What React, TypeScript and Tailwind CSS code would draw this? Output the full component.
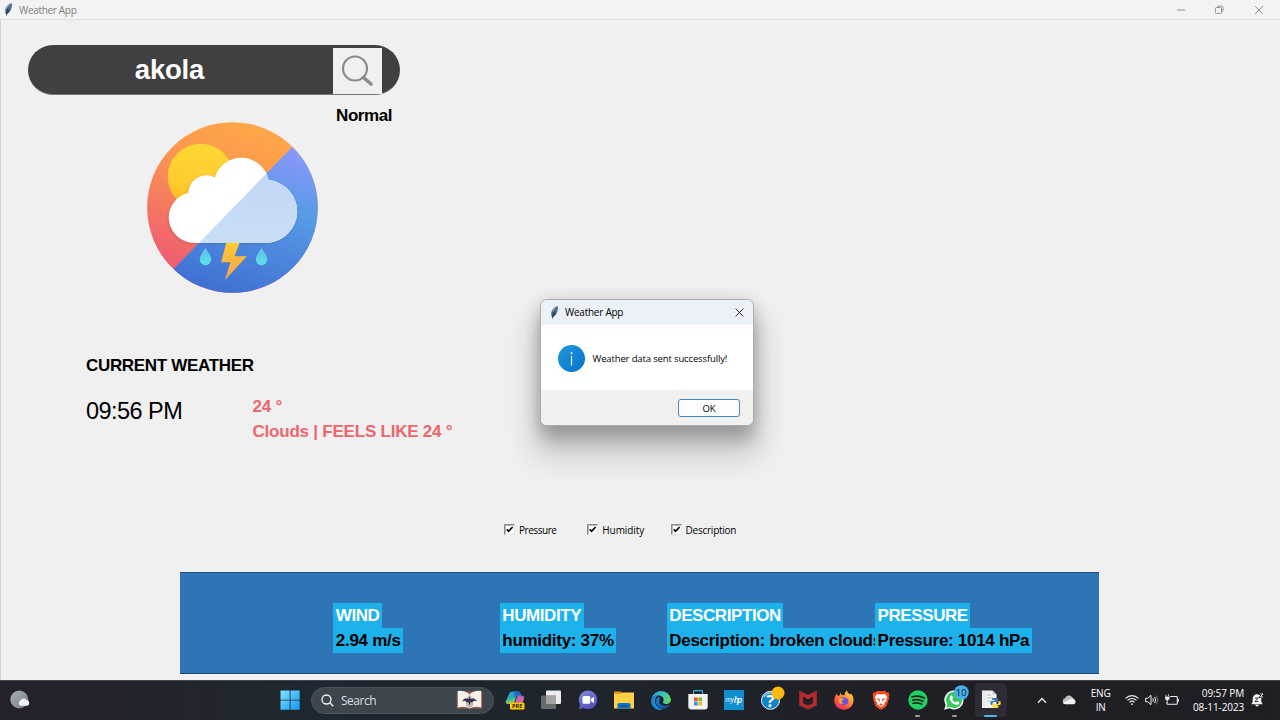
import type { ReactNode } from "react";

const arial = "font-['Liberation_Sans',Arial,sans-serif]";
const segoe = "font-['Open_Sans','Noto_Sans',sans-serif]";

function Feather({ className }: { className: string }) {
  return (
    <svg className={className} viewBox="0 0 24 38" fill="none">
      <path d="M22 1C13 1 5 10 3 19c-1 5-1 10 2 14 5-2 10-6 13-12 3-6 5-13 4-20z" fill="#456a94" />
      <path d="M21 1C14 2 8 9 5 18l6-4 1 4c4-5 7-10 9-16z" fill="#8aa8c6" />
      <path d="M5 33c3-2 8-6 12-12l-4 1 5-5" fill="#1b2c44" />
      <path d="M19 4C12 12 7 22 6 37" stroke="#111a28" strokeWidth="2" />
    </svg>
  );
}

function WeatherLogo() {
  return (
    <svg className="mt-[27px] ml-[146px] h-[171px] w-[171px] shrink-0" viewBox="52 36 512 512">
      <defs>
        <linearGradient id="warm" x1="0.6" y1="0" x2="0.2" y2="1">
          <stop offset="0" stopColor="#ffa748" />
          <stop offset="0.3" stopColor="#fb974f" />
          <stop offset="0.85" stopColor="#ef5f70" />
          <stop offset="1" stopColor="#ee5b72" />
        </linearGradient>
        <linearGradient id="cool" x1="0.85" y1="0.15" x2="0.55" y2="1">
          <stop offset="0" stopColor="#9298fb" />
          <stop offset="0.15" stopColor="#8697f8" />
          <stop offset="0.45" stopColor="#569be6" />
          <stop offset="1" stopColor="#3f6fd2" />
        </linearGradient>
        <linearGradient id="sun" x1="0.5" y1="0" x2="0.4" y2="1">
          <stop offset="0" stopColor="#fcd835" />
          <stop offset="0.6" stopColor="#ffcc2d" />
          <stop offset="1" stopColor="#ffb526" />
        </linearGradient>
        <linearGradient id="bolt" x1="0" y1="0" x2="0" y2="1">
          <stop offset="0" stopColor="#fbcd2f" />
          <stop offset="1" stopColor="#fba052" />
        </linearGradient>
        <linearGradient id="drop" x1="0" y1="0" x2="0" y2="1">
          <stop offset="0" stopColor="#62b9ee" />
          <stop offset="1" stopColor="#58e5ea" />
        </linearGradient>
        <linearGradient id="shade" x1="0" y1="0" x2="0" y2="1">
          <stop offset="0" stopColor="#c2d5f8" />
          <stop offset="1" stopColor="#c9def5" />
        </linearGradient>
        <clipPath id="disc">
          <circle cx="308" cy="292" r="255.5" />
        </clipPath>
        <clipPath id="lower">
          <path d="M600-6 L20 591 H700 V-6 Z" />
        </clipPath>
        <filter id="soft" x="-20%" y="-20%" width="140%" height="140%">
          <feDropShadow dx="-2" dy="3" stdDeviation="5" floodColor="#603050" floodOpacity="0.22" />
        </filter>
        <path
          id="cloud"
          d="M194 398a76 76 0 0 1-18-150A53.500 53.500 0 0 1 255 202A83 83 0 0 1 416 210A94.200 94.200 0 0 1 408 398Z"
        />
      </defs>
      <g clipPath="url(#disc)">
        <rect x="52" y="36" width="512" height="512" fill="url(#warm)" />
        <circle cx="213" cy="200" r="99" fill="url(#sun)" />
        <path d="M600-6 L20 591 H700 V-6 Z" fill="url(#cool)" />
        <use href="#cloud" fill="#fff" filter="url(#soft)" />
        <use href="#cloud" fill="url(#shade)" clipPath="url(#lower)" />
        <path d="M289 398h40l-15 40h37l-66 72 17-54h-28z" fill="url(#bolt)" />
        <path d="M227 412c6 13 17 23 17 36a17 17 0 0 1-34 0c0-13 11-23 17-36z" fill="url(#drop)" />
        <path d="M395 412c6 13 17 23 17 36a17 17 0 0 1-34 0c0-13 11-23 17-36z" fill="url(#drop)" />
      </g>
    </svg>
  );
}

function Check({ label, tracking }: { label: string; tracking: string }) {
  return (
    <label className="flex w-[83.300px] items-center">
      <svg className="h-[11px] w-[11px] shrink-0" viewBox="0 0 11 11">
        <rect x="0" y="0" width="11" height="11" fill="#e6e6e6" />
        <rect x="1" y="1" width="9" height="9" fill="#fff" />
        <path d="M0.500 10.500V0.500H10.500" fill="none" stroke="#8d8d8d" />
        <path d="M1.300 10V1.300H10" fill="none" stroke="#6f6f6f" strokeWidth="0.6" />
        <path d="M2.800 5.200L4.600 7.300L8.600 3" fill="none" stroke="#000" strokeWidth="1.700" />
      </svg>
      <span className={`ml-[4px] text-[10px] leading-[14px] ${tracking}`}>{label}</span>
    </label>
  );
}

function Stat({ title, value }: { title: string; value: string }) {
  return (
    <div className="relative flex min-w-0 flex-col items-start text-[17px] leading-[25px] font-bold whitespace-nowrap">
      <span className="bg-[#1eb2ed] pr-[2.500px] pl-[2.500px] tracking-[-0.420px] text-white">{title}</span>
      <span className="bg-[#1eb2ed] pr-[2.500px] pl-[2.500px] tracking-[-0.290px] text-black">{value}</span>
    </div>
  );
}

function Slot({ children, dot, active }: { children: ReactNode; dot?: boolean; active?: boolean }) {
  return (
    <div className="flex h-10 w-[36.650px] shrink-0 items-center justify-center">
      <div className={`relative flex h-[34px] w-[32px] items-center justify-center rounded-[4px] ${active ? "bg-[#2d2c34]" : ""}`}>
        {children}
        {dot && <span className="absolute bottom-0 h-[2px] w-[5px] rounded-full bg-[#9b9b9f]" />}
        {active && <span className="absolute bottom-0 h-[2px] w-[13px] rounded-full bg-[#58b4ee]" />}
      </div>
    </div>
  );
}

const ic = "h-[20px] w-[20px] overflow-visible";

function Taskbar() {
  return (
    <footer className={`flex h-10 shrink-0 items-center border-t border-[#45434a] bg-linear-to-r from-[#25212a] via-[#1e2830] via-25% to-[#201e25] to-75% pb-px ${segoe}`}>
      <div className="flex w-[279.500px] shrink-0 items-center pl-[9.500px]">
        <svg className={ic} viewBox="0 0 20 20">
          <defs>
            <linearGradient id="moon" x1="0" y1="0" x2="1" y2="1">
              <stop offset="0" stopColor="#aab2ba" />
              <stop offset="1" stopColor="#747c85" />
            </linearGradient>
          </defs>
          <circle cx="9.300" cy="9.500" r="9" fill="url(#moon)" />
          <path d="M10.500 15.800a2.800 2.800 0 0 1 0-5.200 3.600 3.600 0 0 1 6.200-.6 3 3 0 0 1 .6 5.800z" fill="#eef1f4" />
        </svg>
      </div>
      <svg className={ic} viewBox="0 0 20 20">
        <defs>
          <linearGradient id="win" gradientUnits="userSpaceOnUse" x1="0" y1="0" x2="20" y2="20">
            <stop offset="0" stopColor="#80e6ff" />
            <stop offset="1" stopColor="#1096f5" />
          </linearGradient>
        </defs>
        <path d="M.500.500h9.200v9.200H.500zM10.500.500h9.200v9.200h-9.200zM.500 10.500h9.200v9.200H.500zM10.500 10.500h9.200v9.200h-9.200z" fill="url(#win)" />
      </svg>
      <div className="ml-[11.500px] flex h-[27px] w-[183px] shrink-0 items-center rounded-full border border-[#4b535b] bg-[#3d454d] pl-[9px]">
        <svg className="h-[13px] w-[13px] shrink-0" viewBox="0 0 13 13" fill="none" stroke="#f3f3f3" strokeWidth="1.300">
          <circle cx="5.500" cy="5.500" r="4.500" />
          <path d="M8.800 8.800l3.500 3.500" />
        </svg>
        <span className="mt-[2px] ml-[7px] w-[115px] text-[12px] leading-4 tracking-[-0.500px] text-[#dcdfe2]">Search</span>
        <svg className="h-[20px] w-[27px] shrink-0" viewBox="0 0 27 20">
          <path d="M.800 1.500h25.400v17H.800z" fill="#9c5a4c" />
          <path d="M1.800 1Q9 0 13.500 4.500Q18 0 25.200 1V17.500Q18 15.500 13.500 18.500Q9 15.500 1.800 17.500z" fill="#f5f1ea" />
          <path d="M13.500 4.500Q10 8 10 15.500L13.500 18.500L17 15.500Q17 8 13.500 4.500z" fill="#bcb8b4" />
          <path d="M13.500 6l.8 3 3.500-.8 3.500 3-3.500-.4-1.500 1.700-1.700-.6-1.100 3.500-1.100-3.500-1.700.6-1.500-1.700-3.500.4 3.500-3 3.500.8z" fill="#35304f" />
        </svg>
      </div>
      <div className="ml-[2.200px] flex">
        <Slot>
          <svg className={ic} viewBox="0 0 20 20">
            <defs>
              <linearGradient id="copA" x1="0" y1="0" x2="0.3" y2="1">
                <stop offset="0" stopColor="#2294ec" />
                <stop offset="0.6" stopColor="#2fb0a8" />
                <stop offset="1" stopColor="#b7d334" />
              </linearGradient>
              <linearGradient id="copB" x1="0" y1="0" x2="0.2" y2="1">
                <stop offset="0" stopColor="#a55be8" />
                <stop offset="1" stopColor="#f36c7c" />
              </linearGradient>
            </defs>
            <path d="M7.500 1.500h5.500c1.300 0 2 .8 2.500 2l.6 2h-4.300L8.800 14H3C.800 14 .300 12.500 1 10.500L4 4c.7-1.700 2-2.500 3.500-2.500z" fill="url(#copA)" />
            <path d="M9 1.500h4c1.300 0 2 .8 2.500 2l.6 2h-4.300L10 8z" fill="#2369c9" />
            <path d="M12.500 5.500h4c2.200 0 3 1.500 2.400 3.500L17 15H9.500z" fill="url(#copB)" />
            <rect x="5" y="12.800" width="14.500" height="6.700" rx="1" fill="#fccb09" />
            <text x="12.250" y="18.200" textAnchor="middle" fontSize="5.600" fontWeight="700" fontFamily="Open Sans, sans-serif" fill="#2b2200">PRE</text>
          </svg>
        </Slot>
        <Slot>
          <svg className={ic} viewBox="0 0 20 20">
            <rect x="5" y="0.500" width="15" height="13.500" rx="1" fill="#ececec" />
            <rect x="0" y="5.500" width="15" height="13.500" rx="1" fill="#777" fillOpacity="0.85" />
            <rect x="5" y="5.500" width="10" height="8.500" fill="#a3a3a3" />
          </svg>
        </Slot>
        <Slot>
          <svg className={ic} viewBox="0 0 20 20">
            <defs>
              <linearGradient id="chat" x1="0" y1="0" x2="0.5" y2="1">
                <stop offset="0" stopColor="#8388d8" />
                <stop offset="1" stopColor="#5553c0" />
              </linearGradient>
            </defs>
            <path d="M10 .500a9.300 9.300 0 1 1-4.300 17.600L1 19.200l1-4.800A9.300 9.300 0 0 1 10 .500z" fill="url(#chat)" />
            <rect x="4.500" y="6" width="7.800" height="7.800" rx="1.500" fill="#fff" />
            <path d="M13 9l3-2.300v6.500L13 11z" fill="#fff" />
          </svg>
        </Slot>
        <Slot>
          <svg className={ic} viewBox="0 0 20 20">
            <path d="M0 1.500h7l2 2.500H0z" fill="#dd9a12" />
            <path d="M0 4h7l1.500-1.500H19.500q.5 0 .5.500v15.500H0z" fill="#ffcf48" />
            <path d="M3.500 18.500v-4q0-1.500 1.500-1.500h10q1.500 0 1.500 1.500v4z" fill="#1173c2" />
            <path d="M6.500 15.500h7v1h-7z" fill="#0b4a86" />
          </svg>
        </Slot>
        <Slot>
          <svg className={ic} viewBox="0 0 20 20">
            <defs>
              <linearGradient id="edgeA" x1="0" y1="0.3" x2="1" y2="0.4">
                <stop offset="0" stopColor="#279fdf" />
                <stop offset="0.6" stopColor="#38c6bd" />
                <stop offset="1" stopColor="#6bd94f" />
              </linearGradient>
              <linearGradient id="edgeB" x1="0" y1="0" x2="0.6" y2="1">
                <stop offset="0" stopColor="#1b8ddb" />
                <stop offset="1" stopColor="#0f539f" />
              </linearGradient>
            </defs>
            <path d="M.300 9A10 10 0 0 1 20 9.500c0 2.800-2.200 4.500-4.700 4.500-2.200 0-3.500-.8-3.500-1.700 0-.7.900-1 .9-2.600C12.700 7.500 10.500 5.500 7 5.500 3.500 5.500 1.300 7 .300 9z" fill="url(#edgeA)" />
            <path d="M.100 10.500C.300 7.500 3.500 5.300 7 5.500c-2 1-3 3-3 5.300 0 4 3.300 8.200 8.500 8.700C6 21.500 0 17 .100 10.500z" fill="#1b8ade" />
            <path d="M8.500 6.500c-2.300 1-3.500 3-3.500 5 0 4.500 4 7.700 8.500 7.300 2-.6 4-2 5.200-4-1.500.8-3 1.200-4.700 1-4-.2-6.500-3-5.500-5.300z" fill="url(#edgeB)" />
          </svg>
        </Slot>
        <Slot>
          <svg className={ic} viewBox="0 0 20 20">
            <path d="M5.500 4V1.500q0-.8.8-.8h7.400q.8 0 .8.800V4" fill="none" stroke="#3fb2e9" strokeWidth="1.200" />
            <path d="M.300 4h19.400v12.500q0 3-3 3H3.300q-3 0-3-3z" fill="#f2f2f2" />
            <path d="M6 7.500h3.700v3.700H6z" fill="#e8502f" />
            <path d="M10.300 7.500H14v3.700h-3.700z" fill="#7dba31" />
            <path d="M6 11.800h3.700v3.700H6z" fill="#2e9ce2" />
            <path d="M10.300 11.800H14v3.700h-3.700z" fill="#f5b824" />
          </svg>
        </Slot>
        <Slot>
          <svg className={ic} viewBox="0 0 20 20">
            <rect width="20" height="20" rx="0.600" fill="#0f8fd0" />
            <text x="1.300" y="12" fontSize="6.500" fontStyle="italic" textLength="8.500" fontFamily="Open Sans, sans-serif" fill="#fff">my</text>
            <text x="9.700" y="12.600" fontSize="9" fontWeight="600" fontStyle="italic" textLength="8.500" fontFamily="Open Sans, sans-serif" fill="#fff">hp</text>
          </svg>
        </Slot>
        <Slot>
          <svg className={ic} viewBox="0 0 20 20">
            <circle cx="9.500" cy="10.300" r="9" fill="#0d86c6" stroke="#e6f4fb" strokeWidth="1" />
            <path d="M3 7a8 8 0 0 1 8-4" stroke="#fff" strokeWidth="0.900" fill="none" />
            <text x="9.500" y="16.500" textAnchor="middle" fontSize="16.500" fontWeight="700" fontFamily="Open Sans, sans-serif" fill="#fff">?</text>
            <circle cx="17" cy="3" r="6.500" fill="#fdb90b" />
          </svg>
        </Slot>
        <Slot>
          <svg className={ic} viewBox="0 0 20 20">
            <path d="M1.200.500L10 5l8.800-4.500v14.700L10 19.500l-8.800-4.300z" fill="#b5292f" />
            <path d="M5 6.500l5 2.700 5-2.700v6.400l-5 2.500-5-2.500z" fill="#211f26" />
          </svg>
        </Slot>
        <Slot>
          <svg className={ic} viewBox="0 0 20 20">
            <defs>
              <linearGradient id="fox" x1="0.9" y1="0" x2="0.2" y2="1">
                <stop offset="0" stopColor="#ffe14d" />
                <stop offset="0.4" stopColor="#ff9a35" />
                <stop offset="0.75" stopColor="#fb4a45" />
                <stop offset="1" stopColor="#e82d7c" />
              </linearGradient>
            </defs>
            <path d="M3 3.500l.7 2.500 2-.8 1-2.700.9 2.500 3 .2C10.700 3.200 11.500 1.500 13 .300c0 2.200 1.500 2.700 3 4.500l.7-1.500c2 2.200 3 4.500 2.800 7.500C19.200 16 15 19.800 10 19.800S.400 16 .300 10.800C.300 8 1.300 5.500 3 3.500z" fill="url(#fox)" />
            <path d="M6 9.500c1-2 3-2.500 4.500-2.300 2.800.4 4.300 2.300 4 4.500-.4 2.300-2.300 3.600-4.500 3.500-2.600 0-4.600-2-4.500-4.200z" fill="#7351e0" />
            <path d="M5 8.500c1.500.2 3 0 4.800.2.3 1-1.600 1.500-2.300 2.300-.5.700.5 2 2.500 1.800-2 2.200-5 1-5.500-1.800z" fill="#ffa436" />
          </svg>
        </Slot>
        <Slot>
          <svg className={ic} viewBox="0 0 20 20">
            <path d="M5.800 1h8.400l1.300 1.500 1.800-.2 1.200 2.400-.7 1.800.4 1.300-2.500 8c-.3 1-2.700 2.500-5.700 4-3-1.500-5.400-3-5.700-4l-2.500-8 .4-1.300-.7-1.800 1.200-2.400 1.800.2z" fill="#fb4a20" />
            <path d="M6 4l4 .6L14 4l2.200 3-1 2.600.3 1.400-2.200 1.700.5 1.500L10 17l-3.800-2.800.5-1.500L4.500 11l.3-1.400-1-2.600z" fill="#fff" />
            <path d="M5.500 8l3 .7.500 3.500zM14.500 8l-3 .7-.5 3.500zM10 13.300l2 1.200-2 1.300-2-1.300z" fill="#fb4a20" />
          </svg>
        </Slot>
        <Slot dot>
          <svg className={ic} viewBox="0 0 20 20">
            <circle cx="10" cy="10" r="9.700" fill="#20d162" />
            <path d="M4 6.800c4-1.200 8.700-.8 12.200 1.200M4.600 10.200c3.400-1 7.400-.6 10.300 1.100M5.200 13.300c2.900-.8 6-.4 8.500 1" fill="none" stroke="#17231b" strokeLinecap="round" strokeWidth="1.700" />
          </svg>
        </Slot>
        <Slot dot>
          <svg className={ic} viewBox="0 0 20 20">
            <path d="M10 .500a9.500 9.500 0 1 1-4.600 17.800L.200 19.700l1.400-5A9.500 9.500 0 0 1 10 .500z" fill="#f4f6f5" />
            <path d="M10 2a8 8 0 1 1-4.300 14.700L2.300 17.600l1-3.300A8 8 0 0 1 10 2z" fill="#35c95a" />
            <path d="M6.800 5.700c.7-.6 1.200-.4 1.500.3l.7 1.600c.2.700-.9 1.300-.7 1.800.8 1.400 1.800 2.300 3.200 2.900.6.200 1.200-1.200 1.800-1l1.800.9c.8.400-.1 2-1.200 2.500-2.800 1-8.300-2.800-8.200-7 0-.8.600-1.600 1.100-2z" fill="#fff" />
            <circle cx="17.400" cy="2.500" r="7.300" fill="#47b1ee" />
            <text x="17.300" y="6" textAnchor="middle" fontSize="9.500" fontFamily="Open Sans, sans-serif" fill="#0c1c2a">10</text>
          </svg>
        </Slot>
        <Slot active>
          <svg className={ic} viewBox="0 0 20 20">
            <path d="M1 .500h10.500l4 4V18H1z" fill="#f2f2f2" />
            <path d="M11.500.500v4h4" fill="#c8c8c8" />
            <path d="M2.500 3h1.200M2.500 6h1.200M2.500 9h1.200M2.500 12h1.200M2.500 15h1.200M6 5h4M6 8h6M6 11h4" stroke="#b9b9b9" strokeWidth="0.900" />
            <path d="M12.200 8h3.600q1.200 0 1.200 1.200V12h-4q-1.500 0-1.500 1.500V15h-1q-1.200 0-1.200-2t1.200-2h3V10h-2.500V9q0-1 1.200-1z" fill="#3a79b5" />
            <path d="M15.800 18h-2.600q-1.700 0-1.700-1.200V15q0-1 1-1h3.500q1.500 0 1.500-1.500V11h1.100q1.200 0 1.200 2t-1.200 2h-3v.600h2v1.200q0 1.200-1.800 1.200z" fill="#ffd845" />
          </svg>
        </Slot>
      </div>
      <div className="flex flex-1 items-center text-white">
        <svg className="ml-[27.500px] h-[7px] w-[10px] shrink-0" viewBox="0 0 10 7" fill="none" stroke="#eee" strokeWidth="1.300">
          <path d="M1 5.700L5 1.500l4 4.200" />
        </svg>
        <svg className="ml-[15px] h-[10px] w-[15px] shrink-0" viewBox="0 0 15 10">
          <path d="M3.800 9.200a3.200 3.200 0 0 1-.6-6.300A4 4 0 0 1 9.800 1.800L13 5z" fill="#bdbdbf" />
          <path d="M3.500 9.200Q1.300 9 .800 7.500L9.300 3.800a3 3 0 0 1 2.700.7 2.600 2.600 0 0 1 .2 4.700z" fill="#f0f0f0" />
        </svg>
        <div className="mt-px ml-[12px] w-[24px] shrink-0 text-center text-[10px] leading-[13.500px] tracking-[-0.2px]">
          <div>ENG</div>
          <div>IN</div>
        </div>
        <svg className="ml-[12px] h-[12px] w-[14px] shrink-0" viewBox="0 0 14 12" fill="none" stroke="#efefef" strokeWidth="1.100">
          <path d="M.600 4.300a9 9 0 0 1 12.800 0M2.500 6.300a6.400 6.400 0 0 1 9 0M4.500 8.300a3.600 3.600 0 0 1 5 0" />
          <circle cx="7" cy="10.200" r="0.900" fill="#efefef" stroke="none" />
        </svg>
        <svg className="ml-[6px] h-[12px] w-[14px] shrink-0" viewBox="0 0 14 12" fill="none" stroke="#efefef" strokeWidth="1">
          <path d="M.600 4.200h2.200L6 1.300v9.400L2.800 7.800H.600z" />
          <path d="M7.800 4.200q1.200 1.800 0 3.600M9.600 2.900q2.200 3.100 0 6.200" />
          <path d="M11.400 1.500q3 4.500 0 9" stroke="#77767b" />
        </svg>
        <svg className="ml-[6px] h-[12px] w-[14px] shrink-0" viewBox="0 0 14 12" fill="none" stroke="#efefef" strokeWidth="1.100">
          <path d="M5 2.500h6.500q.8 0 .8.800V9.500q0 .8-.8.800H2.800q-.8 0-.8-.8V8" />
          <path d="M13.200 5v2.800" strokeWidth="1.300" />
          <path d="M1 .800v2M3.500.300v2M.500 3h3.700v1.500q0 1.500-1.900 1.500T.500 4.500zM2.300 6v2.500" fill="#efefef" strokeWidth="0.800" />
        </svg>
        <div className="mt-px ml-[6.500px] w-[59px] shrink-0 text-right text-[10px] leading-[13.500px] tracking-[-0.1px] whitespace-nowrap">
          <div>09:57 PM</div>
          <div>08-11-2023</div>
        </div>
        <svg className="ml-[7px] h-[14px] w-[13px] shrink-0" viewBox="0 0 13 14">
          <path d="M6 1.200a4.300 4.300 0 0 1 4.300 4.300v3.200l1.400 2.500H.300l1.400-2.500V5.500A4.300 4.300 0 0 1 6 1.200zM4.300 11.800h3.400a1.700 1.700 0 0 1-3.400 0z" fill="#f4f4f4" />
          <path d="M4 5h3L4 8.600h3.200" fill="none" stroke="#201e25" strokeWidth="0.900" />
          <path d="M9.300.900h2.600l-2.600 3h2.800" fill="none" stroke="#201e25" strokeWidth="2" />
          <path d="M9.300.900h2.600l-2.600 3h2.800" fill="none" stroke="#f4f4f4" strokeWidth="0.900" />
        </svg>
      </div>
    </footer>
  );
}

function Dialog() {
  return (
    <section className={`absolute top-[299px] left-[540px] flex h-[127px] w-[214px] flex-col overflow-hidden rounded-[7px] border border-[#a9abad] bg-white text-black shadow-[0_15px_16px_0px_rgba(0,0,0,0.17),0_24px_30px_6px_rgba(0,0,0,0.17),0_2px_18px_rgba(0,0,0,0.14)] ${segoe}`}>
      <header className="flex h-[25px] shrink-0 items-center bg-[#ebf1f7] pl-[8.500px]">
        <Feather className="h-[13px] w-[9px]" />
        <span className="-mt-px ml-[6.500px] flex-1 text-[10px] leading-[14px] tracking-[-0.250px]">Weather App</span>
        <svg className="mr-[9.500px] h-[9px] w-[9px]" viewBox="0 0 9 9" stroke="#222" strokeWidth="1">
          <path d="M.600.600l7.800 7.800M8.400.600L.600 8.400" />
        </svg>
      </header>
      <div className="flex flex-1 items-center pl-[17px]">
        <svg className="mt-px h-[27px] w-[27px] shrink-0" viewBox="0 0 27 27">
          <defs>
            <linearGradient id="info" x1="0" y1="0" x2="1" y2="1">
              <stop offset="0" stopColor="#1f97dd" />
              <stop offset="1" stopColor="#0873c9" />
            </linearGradient>
          </defs>
          <circle cx="13.500" cy="13.500" r="13.500" fill="url(#info)" />
          <path d="M12.900 10.800h1.200v9.700h-1.200z" fill="#fff" />
          <circle cx="13.500" cy="8" r="0.900" fill="#fff" />
        </svg>
        <span className="mt-[2px] ml-[7.500px] text-[9.500px] leading-[14px] tracking-[-0.140px] whitespace-nowrap">Weather data sent successfully!</span>
      </div>
      <div className="flex h-[35px] shrink-0 items-center justify-end bg-[#f0f0f0] pr-[13px]">
        <button className="h-[18px] w-[62px] rounded-[3px] border border-[#3d8ccc] bg-[#fdfdfd] pt-px text-[9.500px] leading-[15px]">OK</button>
      </div>
    </section>
  );
}

export default function App() {
  return (
    <div className="relative flex h-[720px] w-[1280px] flex-col overflow-hidden bg-[#f0f0f0]">
      <header className={`flex h-5 shrink-0 items-center border-b border-[#dfdfdf] bg-[#f3f3f3] pl-[4px] ${segoe}`}>
        <Feather className="h-[13px] w-[9px]" />
        <span className="ml-[6px] flex-1 text-[10px] leading-[14px] tracking-[-0.320px] text-[#7d7d7d]">Weather App</span>
        <svg className="mr-[13.500px] h-[10px] w-[90px]" viewBox="0 0 90 10" fill="none" stroke="#8a8a8a" strokeWidth="0.900">
          <path d="M0 5h8" />
          <rect x="38.500" y="2.500" width="6" height="6" rx="1" />
          <path d="M40.500 2.300q0-1.300 1.300-1.300h2.700q1.500 0 1.500 1.500v2.700q0 1.300-1.200 1.300M78 1l8 8M86 1l-8 8" />
        </svg>
      </header>

      <main className={`flex h-[660px] shrink-0 flex-col border-l border-[#d4d4d4] ${arial}`}>
        <div className="mt-[25px] ml-[27px] flex h-[49.500px] w-[371.500px] shrink-0 items-end rounded-full border-b border-[#777] bg-[#404040]">
          <div className="flex h-full w-[305px] items-center justify-center pt-[1.500px] pr-[23px] text-[27.500px] leading-8 font-bold tracking-[-0.200px] text-white">
            <span className="pl-[1px]">akola</span>
          </div>
          <button className="h-[46px] w-[48.500px] bg-[#f0f0f0]">
            <svg className="mt-px ml-[8px] h-[32px] w-[33px]" viewBox="0 0 33 32" fill="none" stroke="#8b8b8b">
              <circle cx="14" cy="13.500" r="12" strokeWidth="2.200" />
              <path d="M22.500 22.500L30 29" strokeWidth="3.600" strokeLinecap="round" />
            </svg>
          </button>
        </div>
        <div className="mt-[10px] -mb-[32px] ml-[335px] h-[22px] text-[17px] leading-[22px] font-bold tracking-[-0.400px]">Normal</div>
        <WeatherLogo />

        <h1 className="mt-[61px] ml-[85px] h-[24px] text-[17px] leading-[24px] font-bold tracking-[-0.320px]">CURRENT WEATHER</h1>
        <div className="mt-[16px] ml-[85px] flex h-[51px]">
          <div className="mt-px w-[166.500px] text-[23.500px] leading-[33px] tracking-[-0.550px]">09:56 PM</div>
          <div className="text-[17px] leading-[25px] font-bold tracking-[-0.220px] text-[#ee666d]">
            <p>24 °</p>
            <p>Clouds | FEELS LIKE 24 °</p>
          </div>
        </div>

        <div className={`mt-[78px] ml-[503px] flex h-[14px] ${segoe}`}>
          <Check label="Pressure" tracking="tracking-[-0.450px]" />
          <Check label="Humidity" tracking="tracking-[-0.080px]" />
          <Check label="Description" tracking="tracking-[-0.250px]" />
        </div>

        <section className="mt-[35.500px] ml-[179px] grid h-[102px] w-[919px] grid-cols-[166.500px_167px_208.300px_1fr] border-y border-[#1f4a7a] bg-[#2e75b5] pt-[30px] pl-[153.300px]">
          <Stat title="WIND" value="2.94 m/s" />
          <Stat title="HUMIDITY" value="humidity: 37%" />
          <Stat title="DESCRIPTION" value="Description: broken clouds" />
          <Stat title="PRESSURE" value="Pressure: 1014 hPa" />
        </section>
      </main>

      <Taskbar />
      <Dialog />
    </div>
  );
}
